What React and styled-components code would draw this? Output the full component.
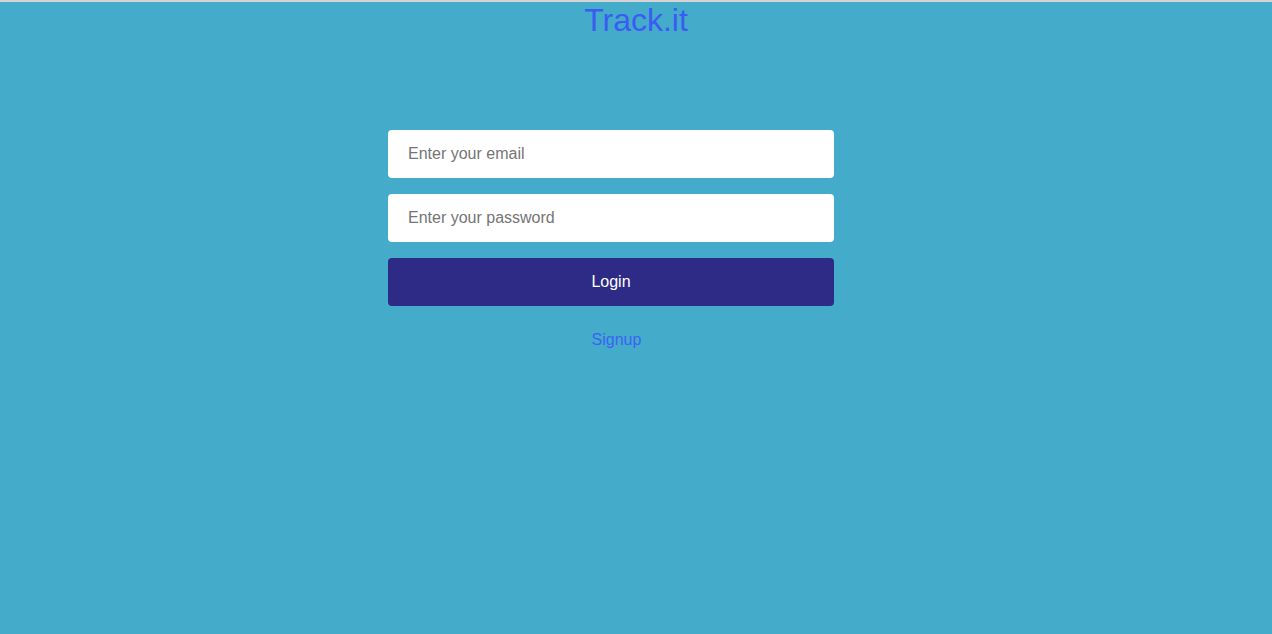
import React from 'react';
import styled, { createGlobalStyle } from 'styled-components';

const GlobalStyle = createGlobalStyle`
  html, body {
    margin: 0;
    padding: 0;
    background: #44abcb;
    font-family: "Liberation Sans", Arial, sans-serif;
  }
  * {
    box-sizing: border-box;
  }
`;

// Full page background with the thin grey line on top
const Page = styled.div`
  min-height: 634px;
  background: #44abcb;
  border-top: 2px solid #d4d4d4;
`;

const Title = styled.h1`
  margin: 0;
  text-align: center;
  font-size: 32px;
  font-weight: 400;
  line-height: 37px;
  color: #3a5cf2;
`;

const Form = styled.form`
  width: 446px;
  margin: 91px 0 0 388px;
  display: flex;
  flex-direction: column;
  gap: 16px;
`;

const Input = styled.input`
  height: 48px;
  width: 100%;
  border: none;
  border-radius: 4px;
  background: #ffffff;
  padding: 0 20px;
  font-family: inherit;
  font-size: 16px;
  color: #333;
  outline: none;

  &::placeholder {
    color: #757575;
  }
`;

const Button = styled.button`
  height: 48px;
  width: 100%;
  border: none;
  border-radius: 4px;
  background: #2d2b85;
  color: #ffffff;
  font-family: inherit;
  font-size: 16px;
  cursor: pointer;
`;

const SignupLink = styled.a`
  align-self: center;
  margin: 9px 0 0 11px;
  font-size: 16px;
  color: #3a63f4;
  text-decoration: none;
`;

export default function App() {
  return (
    <>
      <GlobalStyle />
      <Page>
        <Title>Track.it</Title>
        <Form onSubmit={(e) => e.preventDefault()}>
          <Input type="email" placeholder="Enter your email" />
          <Input type="password" placeholder="Enter your password" />
          <Button type="submit">Login</Button>
          <SignupLink href="#">Signup</SignupLink>
        </Form>
      </Page>
    </>
  );
}
